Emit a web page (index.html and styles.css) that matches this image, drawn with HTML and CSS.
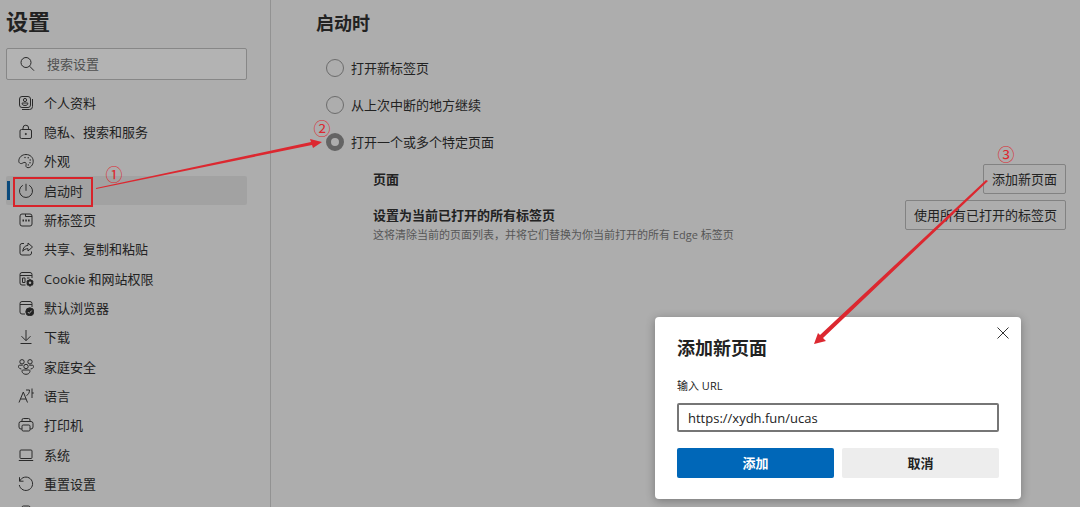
FILE: index.html
```html
<!DOCTYPE html>
<html lang="zh-CN">
<head>
  <meta charset="utf-8">
  <title>设置</title>
  <link rel="stylesheet" href="styles.css">
</head>
<body>
  <div class="page">
    <nav class="sidebar">
      <h1>设置</h1>
      <label class="search">
        <svg class="icon" viewBox="0 0 16 16"><circle cx="7" cy="6.500" r="5"/><path d="M10.600 10.200L15 14.700"/></svg>
        <input type="text" placeholder="搜索设置" aria-label="搜索设置">
      </label>
      <ul class="menu">
        <li><a href="#">
          <svg class="icon" viewBox="0 0 16 16"><rect x="1.500" y="1.500" width="11" height="11" rx="2.500"/><circle cx="7" cy="5" r="1.600"/><path d="M4.200 8h5.600v.8c0 2.200-5.600 2.200-5.600 0zM14.500 4v7.500a3 3 0 0 1-3 3H4"/></svg>
          个人资料</a></li>
        <li><a href="#">
          <svg class="icon" viewBox="0 0 16 16"><rect x="2" y="5.500" width="11.500" height="9" rx="1.500"/><path d="M5 5.500V4a2.800 2.800 0 0 1 5.600 0v1.500"/><circle class="solid" cx="7.800" cy="10" r=".6"/></svg>
          隐私、搜索和服务</a></li>
        <li><a href="#">
          <svg class="icon" viewBox="0 0 16 16"><path d="M.8 7.800C1 4 4.200 1.500 8 1.500c4.300 0 7.200 3 7.200 6.700 0 3.800-2.700 6.500-5.200 6.500-2 0-2.300-1.600-1.900-3 .4-1.700-.6-2.700-2.200-2.200-1.400.5-2.200 1.400-3.400 1C1.200 10.100.700 9 .800 7.800z"/><circle class="dot" cx="7" cy="4.500" r=".7"/><circle class="dot" cx="10.200" cy="4.700" r=".7"/><circle class="dot" cx="12.200" cy="7" r=".7"/><circle class="dot" cx="12" cy="9.700" r=".7"/><circle class="dot" cx="10.300" cy="11.900" r=".7"/></svg>
          外观</a></li>
        <li><a href="#" class="active">
          <svg class="icon" viewBox="0 0 16 16"><path d="M8 .8v7M4.800 2.300a6.500 6.500 0 1 0 6.400 0"/></svg>
          启动时</a></li>
        <li><a href="#">
          <svg class="icon" viewBox="0 0 16 16"><rect x="2" y="2" width="12" height="12" rx="2"/><path d="M7.500 2v2.500H14"/><path class="thick" d="M4.500 8.500h1.500M7.300 8.500h1.500M10.100 8.500h1.500"/></svg>
          新标签页</a></li>
        <li><a href="#">
          <svg class="icon" viewBox="0 0 16 16"><path d="M6 2.500H4a2 2 0 0 0-2 2V12a2 2 0 0 0 2 2h7.500a2 2 0 0 0 2-2v-1.500"/><path d="M10 2l4.500 4-4.500 4V7.700C7.500 7.700 6 8.500 4.800 10.300 5 7 6.700 4.700 10 4.300z"/></svg>
          共享、复制和粘贴</a></li>
        <li><a href="#">
          <svg class="icon" viewBox="0 0 16 16"><path d="M7.500 14H4a2 2 0 0 1-2-2V3.500a2 2 0 0 1 2-2h8a2 2 0 0 1 2 2V7M2 4.500h12M4.500 7h2.500v4.500H4.500zM9 7h2.500"/><circle class="gear" cx="12" cy="11.800" r="2.300"/><path class="thick" d="M12 8.200v1.300M12 14v1.500M8.900 10l1.100.6M14 12.900l1.100.6M8.900 13.600l1.100-.6M14 10.700l1.100-.6"/></svg>
          Cookie 和网站权限</a></li>
        <li><a href="#">
          <svg class="icon" viewBox="0 0 16 16"><path d="M7 14H4a2 2 0 0 1-2-2V3.500a2 2 0 0 1 2-2h8a2 2 0 0 1 2 2V7M2 4.500h12"/><circle class="solid" cx="11.800" cy="11.800" r="4"/><path class="tick" d="M9.800 12l1.400 1.400 2.600-2.900"/></svg>
          默认浏览器</a></li>
        <li><a href="#">
          <svg class="icon" viewBox="0 0 16 16"><path d="M8 1v10.500M3.500 7.200L8 11.700l4.500-4.500M2.500 14.500h11"/></svg>
          下载</a></li>
        <li><a href="#">
          <svg class="icon" viewBox="0 0 16 16"><circle cx="4" cy="2.800" r="2.200"/><circle cx="12" cy="2.800" r="2.200"/><circle cx="8" cy="7.500" r="2.200"/><path d="M4.800 6.200H1.500C-.3 6.200.2 10 3.400 10M11.200 6.200h3.300c1.800 0 1.300 3.800-1.900 3.800M4.800 11h6.400c1.500 0 1 4.300-3.200 4.300S3.300 11 4.800 11z"/></svg>
          家庭安全</a></li>
        <li><a href="#">
          <svg class="icon" viewBox="0 0 16 16"><path d="M1 14.500L5.300 4l4.200 10.500M2.500 11h5.600M8 2h3.500c0 2.500-1 4.500-3 5.500M14 .5v9.500M14 5h1.800"/></svg>
          语言</a></li>
        <li><a href="#">
          <svg class="icon" viewBox="0 0 16 16"><path d="M4 4.500V3a1.500 1.500 0 0 1 1.500-1.500h5A1.500 1.500 0 0 1 12 3v1.500M4 12H3a2 2 0 0 1-2-2V6.500a2 2 0 0 1 2-2h10a2 2 0 0 1 2 2V10a2 2 0 0 1-2 2h-1"/><rect x="4" y="8" width="8" height="6" rx="1.200"/></svg>
          打印机</a></li>
        <li><a href="#">
          <svg class="icon" viewBox="0 0 16 16"><rect x="2" y="3" width="12" height="8.500" rx="1"/><path d="M.8 13.500h14.400"/></svg>
          系统</a></li>
        <li><a href="#">
          <svg class="icon" viewBox="0 0 16 16"><path d="M1.500 1.200v4h4M1.700 5.200a6.700 6.700 0 1 1-.4 3.800"/></svg>
          重置设置</a></li>
        <li><a href="#">
          <svg class="icon" viewBox="0 0 16 16"><rect x="4" y="1" width="8" height="14" rx="1.500"/></svg>
        </a></li>
      </ul>
    </nav>

    <main class="content">
      <h2>启动时</h2>
      <form class="options">
        <label><input type="radio" name="startup"> 打开新标签页</label>
        <label><input type="radio" name="startup"> 从上次中断的地方继续</label>
        <label><input type="radio" name="startup" checked> 打开一个或多个特定页面</label>
      </form>
      <section class="setting">
        <h3>页面</h3>
        <button type="button">添加新页面</button>
      </section>
      <section class="setting">
        <div>
          <h3>设置为当前已打开的所有标签页</h3>
          <p>这将清除当前的页面列表，并将它们替换为你当前打开的所有 Edge 标签页</p>
        </div>
        <button type="button">使用所有已打开的标签页</button>
      </section>
    </main>
  </div>

  <div class="dialog" role="dialog" aria-labelledby="dialogTitle">
    <button type="button" class="close" aria-label="关闭">
      <svg viewBox="0 0 12 12"><path d="M.5.5l11 11M11.500.5l-11 11"/></svg>
    </button>
    <h2 id="dialogTitle">添加新页面</h2>
    <label for="url">输入 URL</label>
    <input type="text" id="url" value="https://xydh.fun/ucas">
    <div class="dialog-buttons">
      <button type="button" class="primary">添加</button>
      <button type="button">取消</button>
    </div>
  </div>

  <!-- numbered steps -->
  <svg class="steps" width="1080" height="507" viewBox="0 0 1080 507">
    <rect x="14" y="178" width="78" height="28"/>
    <path d="M96 188L311 142L310 139L322 142L313 148L312 145L96 189z"/>
    <path d="M986 180L820 335L818 333L814 344L826 341L823 338L988 181z"/>
    <text x="114" y="181">①</text>
    <text x="322" y="135">②</text>
    <text x="1006" y="161">③</text>
  </svg>
</body>
</html>
```
FILE: styles.css
```css
* {
  margin: 0;
  padding: 0;
  box-sizing: border-box;
}
body {
  position: relative;
  height: 100vh;
  overflow: hidden;
  background-color: #adadad;
  color: #222;
  font-family: "Open Sans", "Noto Sans CJK SC", sans-serif;
  font-size: 13px;
  line-height: 20px;
}
button, input {
  font: inherit;
  color: inherit;
}
.page {
  display: flex;
  height: 100%;
}

/* sidebar */
.sidebar {
  flex: none;
  width: 271px;
  padding: 5px 23px 0 6px;
  border-right: 1px solid #929292;
}
h1 {
  font-size: 22px;
  line-height: 32px;
}
.search {
  display: flex;
  align-items: center;
  gap: 12px;
  height: 32px;
  margin-top: 11px;
  padding: 0 12px;
  background-color: #b3b3b3;
  border: 1px solid #878787;
  border-radius: 2px;
}
.search input {
  flex: 1;
  min-width: 0;
  border: none;
  outline: none;
  background: none;
}
.search input::placeholder {
  color: #505050;
  opacity: 1;
}
.menu {
  display: grid;
  grid-template-rows: repeat(15, 1fr);
  height: 440px;
  margin-top: 8px;
  list-style: none;
}
.menu a {
  display: flex;
  align-items: center;
  gap: 10px;
  height: 100%;
  padding-left: 12px;
  color: inherit;
  text-decoration: none;
}
.menu .active {
  position: relative;
  background-color: #a2a2a2;
  border-radius: 2px;
}
.menu .active::before {
  content: "";
  position: absolute;
  left: 1px;
  top: 5px;
  bottom: 5px;
  width: 3px;
  background-color: #0b4a7c;
}
.icon {
  flex: none;
  width: 16px;
  height: 16px;
  fill: none;
  stroke: #2a2a2a;
  stroke-width: 1;
}
.icon .solid {
  fill: #222;
}
.icon .dot {
  fill: #222;
  stroke: none;
}
.icon .gear {
  stroke: #222;
  stroke-width: 2;
}
.icon .thick {
  stroke-width: 2;
}
.icon .tick {
  stroke: #adadad;
}

/* content */
.content {
  flex: 1;
  padding: 8px 14px 0 45px;
}
h2 {
  font-size: 18px;
  line-height: 30px;
}
.options {
  display: grid;
  gap: 17px;
  padding: 20px 0 12px 10px;
}
.options label {
  display: flex;
  align-items: center;
  gap: 7px;
}
.options input {
  appearance: none;
  width: 18px;
  height: 18px;
  border: 1px solid #6c6c6c;
  border-radius: 50%;
}
.options input:checked {
  border: 5px solid #646464;
}
.setting {
  display: flex;
  justify-content: space-between;
  align-items: flex-start;
  margin-bottom: 6px;
  padding-left: 57px;
}
.setting h3 {
  margin-top: 5px;
  font-size: 13px;
  line-height: 20px;
}
.setting p {
  font-size: 11px;
  color: #565656;
}
.setting button {
  height: 30px;
  padding: 0 8px;
  background: none;
  border: 1px solid #828282;
  border-radius: 2px;
}

/* dialog */
.dialog {
  position: absolute;
  right: 59px;
  bottom: 8px;
  width: 366px;
  padding: 16px 22px 21px;
  background-color: #fff;
  border-radius: 4px;
  box-shadow: 0 2px 10px rgba(0, 0, 0, 0.3);
}
.dialog label {
  display: block;
  margin: 13px 0 7px;
  font-size: 11px;
}
.dialog input {
  width: 100%;
  height: 29px;
  padding: 0 9px;
  border: 2px solid #767676;
  border-radius: 2px;
  outline: none;
}
.dialog-buttons {
  display: flex;
  gap: 8px;
  margin-top: 16px;
}
.dialog-buttons button {
  flex: 1;
  height: 30px;
  background-color: #ededed;
  border: none;
  border-radius: 2px;
  font-weight: bold;
}
.dialog-buttons .primary {
  background-color: #0067b8;
  color: #fff;
}
.close {
  position: absolute;
  top: 10px;
  right: 12px;
  width: 12px;
  height: 12px;
  border: none;
  background: none;
}
.close svg {
  display: block;
  fill: none;
  stroke: #333;
}

.steps {
  position: absolute;
  left: 0;
  top: 0;
  pointer-events: none;
}
.steps rect {
  fill: none;
  stroke: #d8232a;
  stroke-width: 2;
}
.steps path {
  fill: #dc2830;
}
.steps text {
  fill: #dc2830;
  font-family: "Noto Sans CJK SC", sans-serif;
  font-size: 17px;
  text-anchor: middle;
}
```
